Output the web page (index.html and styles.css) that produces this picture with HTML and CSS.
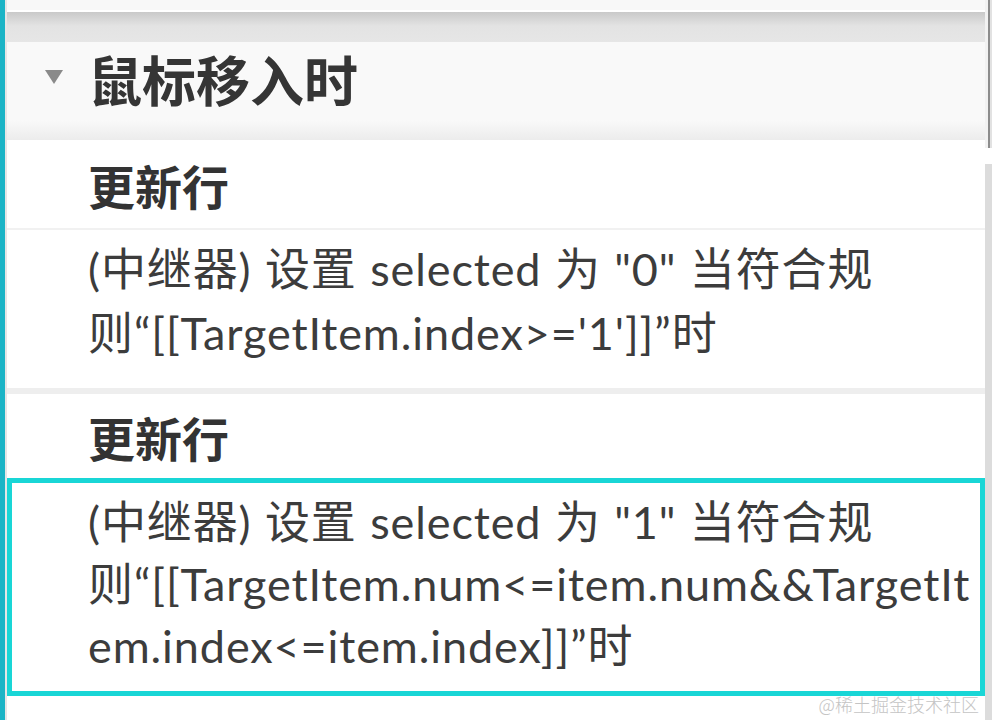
FILE: index.html
```html
<!DOCTYPE html>
<html lang="zh-CN">
<head>
<meta charset="utf-8">
<title>鼠标移入时</title>
<link rel="stylesheet" href="styles.css">
</head>
<body>
<div class="frame">
  <div class="panel">
    <div class="topbar"></div>
    <div class="shadowbar"></div>
    <div class="header">
      <span class="caret"></span>
      <span class="header-title">鼠标移入时</span>
    </div>
    <div class="action-title">更新行</div>
    <div class="action-desc">
      <div class="line">(中继器) 设置 selected 为 "0" 当符合规</div>
      <div class="line">则“[[TargetItem.index&gt;='1']]”时</div>
    </div>
    <div class="action-title second">更新行</div>
    <div class="action-desc selected">
      <div class="line">(中继器) 设置 selected 为 "1" 当符合规</div>
      <div class="line">则“[[TargetItem.num&lt;=item.num&amp;&amp;TargetIt</div>
      <div class="line">em.index&lt;=item.index]]”时</div>
    </div>
    <div class="footer">
      <span class="watermark">@稀土掘金技术社区</span>
    </div>
  </div>
  <div class="scrollbar">
    <div class="scroll-top"></div>
    <div class="scroll-gap"></div>
    <div class="scroll-track"></div>
  </div>
</div>
</body>
</html>
```

FILE: styles.css
```css
html, body {
  margin: 0;
  padding: 0;
}
body {
  width: 992px;
  height: 720px;
  overflow: hidden;
  background: #ffffff;
  font-family: "Noto Sans CJK SC", "Noto Sans", sans-serif;
  color: #3a3a3a;
}
.frame {
  display: flex;
  height: 720px;
  border-left: 5px solid #1bb4c6;
  box-sizing: border-box;
}
.panel {
  flex: 1;
  display: flex;
  flex-direction: column;
  border-left: 2px solid #e6e6e6;
  min-width: 0;
}
.topbar {
  height: 10px;
  background: #f8f8f8;
  border-bottom: 2px solid #ffffff;
}
.shadowbar {
  height: 30px;
  background: linear-gradient(#c9c9c9 0, #d4d4d4 6px, #e3e3e3 14px, #e6e6e6 100%);
}
.header {
  height: 98px;
  display: flex;
  align-items: center;
  padding-left: 38px;
  background: linear-gradient(#f9f9f9 0, #f9f9f9 80%, #ececec 100%);
}
.caret {
  width: 0;
  height: 0;
  border-left: 9px solid transparent;
  border-right: 9px solid transparent;
  border-top: 14px solid #8a8a8a;
  margin-right: 25px;
  margin-top: -28px;
}
.header-title {
  font-size: 54px;
  font-weight: 700;
  color: #353535;
  line-height: 1;
  margin-top: -24px;
}
.action-title {
  height: 88px;
  display: flex;
  align-items: center;
  padding-left: 81px;
  font-size: 47px;
  font-weight: 700;
  color: #333333;
  border-bottom: 2px solid #f1f1f1;
  background: #ffffff;
}
.action-title.second {
  height: 84px;
  border-bottom: none;
}
.action-desc {
  padding: 7px 0 23px 81px;
  font-family: "Lato", "Noto Sans CJK SC", sans-serif;
  font-size: 45px;
  line-height: 64px;
  letter-spacing: 0.9px;
  word-spacing: 1px;
  color: #3c3c3c;
  border-bottom: 6px solid #eeeeee;
}
.action-desc .line {
  white-space: nowrap;
}
.action-desc.selected {
  padding: 8px 0 14px 76px;
  border: 5px solid #19d6d6;
  line-height: 62px;
}
.footer {
  flex: 1;
  display: flex;
  justify-content: flex-end;
  align-items: flex-start;
  padding-right: 6px;
}
.watermark {
  font-family: "Noto Sans CJK SC", sans-serif;
  font-size: 18px;
  font-weight: 300;
  color: #c4c4c4;
  line-height: 20px;
  margin-top: -2px;
}
.scrollbar {
  width: 7px;
  display: flex;
  flex-direction: column;
}
.scroll-top {
  height: 148px;
  background: linear-gradient(to right, #f2f2f2 0, #f2f2f2 3px, #8c8c8c 3px, #8c8c8c 5px, #e2e2e2 5px);
}
.scroll-gap {
  height: 16px;
  background: #ffffff;
}
.scroll-track {
  flex: 1;
  background: #dcdcdc;
}
```
